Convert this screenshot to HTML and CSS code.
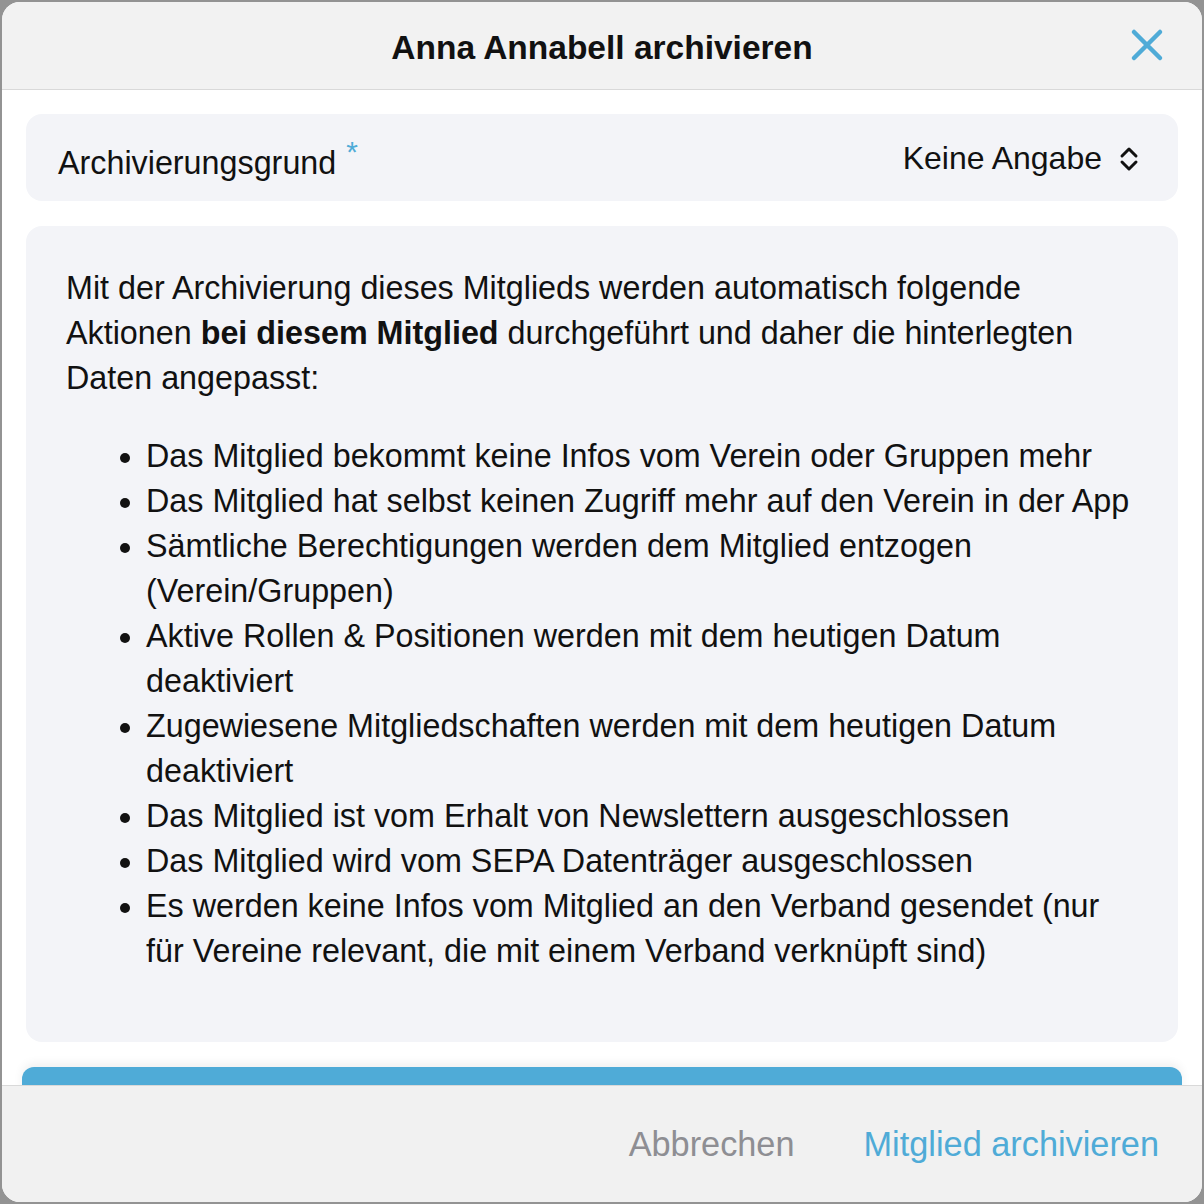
FILE: index.html
```html
<!DOCTYPE html>
<html lang="de">
<head>
  <meta charset="UTF-8">
  <title>Mitglied archivieren</title>
  <link rel="stylesheet" href="styles.css">
</head>
<body>
  <div class="modal">
    <div class="modal-header">
      <h1>Anna Annabell archivieren</h1>
      <button class="close" aria-label="Schließen">
        <svg width="34" height="34" viewBox="0 0 34 34">
          <path d="M4 4 L30 30 M30 4 L4 30" stroke="#4fabd7" stroke-width="4.5" stroke-linecap="round" fill="none"/>
        </svg>
      </button>
    </div>

    <div class="modal-body">
      <div class="field">
        <span class="label">Archivierungsgrund<sup>*</sup></span>
        <span class="select">
          Keine Angabe
          <svg width="22" height="26" viewBox="0 0 22 26">
            <path d="M4 10 L11 3 L18 10 M4 16 L11 23 L18 16" stroke="#111" stroke-width="3" stroke-linecap="round" stroke-linejoin="round" fill="none"/>
          </svg>
        </span>
      </div>

      <div class="info">
        <p>Mit der Archivierung dieses Mitglieds werden automatisch folgende Aktionen <b>bei diesem Mitglied</b> durchgeführt und daher die hinterlegten Daten angepasst:</p>
        <ul>
          <li>Das Mitglied bekommt keine Infos vom Verein oder Gruppen mehr</li>
          <li>Das Mitglied hat selbst keinen Zugriff mehr auf den Verein in der App</li>
          <li>Sämtliche Berechtigungen werden dem Mitglied entzogen (Verein/Gruppen)</li>
          <li>Aktive Rollen &amp; Positionen werden mit dem heutigen Datum deaktiviert</li>
          <li>Zugewiesene Mitgliedschaften werden mit dem heutigen Datum deaktiviert</li>
          <li>Das Mitglied ist vom Erhalt von Newslettern ausgeschlossen</li>
          <li>Das Mitglied wird vom SEPA Datenträger ausgeschlossen</li>
          <li>Es werden keine Infos vom Mitglied an den Verband gesendet (nur für Vereine relevant, die mit einem Verband verknüpft sind)</li>
        </ul>
      </div>

      <div class="blue-bar"></div>
    </div>

    <div class="modal-footer">
      <button class="btn btn-cancel">Abbrechen</button>
      <button class="btn btn-primary">Mitglied archivieren</button>
    </div>
  </div>
</body>
</html>
```

FILE: styles.css
```css
html, body {
  margin: 0;
  height: 100%;
}
body {
  background-color: #939393;
  font-family: "Liberation Sans", Arial, sans-serif;
  color: #111;
  padding: 2px;
  box-sizing: border-box;
}
.modal {
  width: 1200px;
  height: 1200px;
  background: #fff;
  border-radius: 18px;
  overflow: hidden;
  display: flex;
  flex-direction: column;
}
.modal-header {
  height: 87px;
  flex: none;
  background: #f2f2f2;
  border-bottom: 1px solid #d9d9d9;
  display: flex;
  align-items: center;
  justify-content: center;
  position: relative;
}
.modal-header h1 {
  margin: 0;
  padding-top: 5px;
  font-size: 33.5px;
  font-weight: bold;
  color: #111;
}
.close {
  position: absolute;
  right: 38px;
  top: 26px;
  background: none;
  border: none;
  padding: 0;
  cursor: pointer;
}
.modal-body {
  flex: 1;
  padding: 24px 24px 0;
  display: flex;
  flex-direction: column;
  gap: 25px;
  overflow: hidden;
}
.field {
  background: #f3f4f8;
  border-radius: 16px;
  height: 87px;
  flex: none;
  display: flex;
  align-items: center;
  justify-content: space-between;
  padding: 0 38px 0 32px;
}
.label {
  font-size: 32.3px;
  padding-top: 12px;
}
.label sup {
  color: #4fabd7;
  font-size: 30px;
  margin-left: 10px;
  vertical-align: 12px;
  line-height: 0;
}
.select {
  font-size: 32px;
  display: flex;
  align-items: center;
  gap: 16px;
  padding-top: 2px;
}
.info {
  background: #f3f4f8;
  border-radius: 16px;
  padding: 40px 40px 40px;
  font-size: 32.3px;
  line-height: 45px;
  flex: none;
}
.info p {
  margin: 0;
}
.info ul {
  margin: 33px 0 28px;
  padding-left: 80px;
}
.blue-bar {
  flex: none;
  height: 40px;
  margin: 0 -4px;
  background: #4fabd7;
  border-radius: 12px 12px 0 0;
  box-shadow: 0 -4px 10px rgba(0, 0, 0, 0.06);
}
.modal-footer {
  height: 116px;
  flex: none;
  background: #f1f1f1;
  border-top: 1px solid #d9d9d9;
  display: flex;
  align-items: center;
  justify-content: flex-end;
  gap: 69px;
  padding-right: 43px;
}
.btn {
  background: none;
  border: none;
  padding: 0;
  font-family: inherit;
  font-size: 34.3px;
  cursor: pointer;
}
.btn-cancel {
  color: #8e8e93;
}
.btn-primary {
  color: #4fabd7;
}
```
